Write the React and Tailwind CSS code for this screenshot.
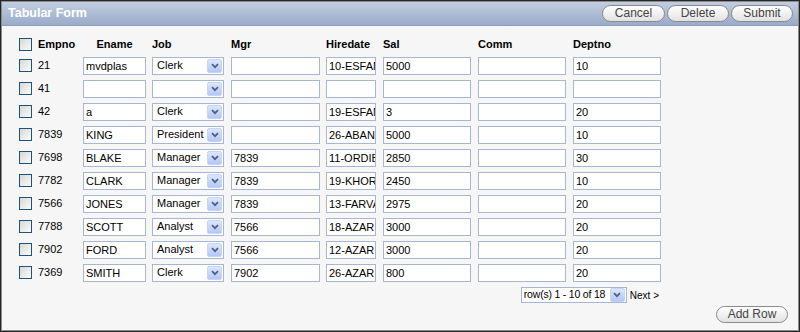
import React from 'react';

const rows = [
  ['21', 'mvdplas', 'Clerk', '', '10-ESFAND', '5000', '', '10'],
  ['41', '', '', '', '', '', '', ''],
  ['42', 'a', 'Clerk', '', '19-ESFAND', '3', '', '20'],
  ['7839', 'KING', 'President', '', '26-ABAN', '5000', '', '10'],
  ['7698', 'BLAKE', 'Manager', '7839', '11-ORDIBEHESHT', '2850', '', '30'],
  ['7782', 'CLARK', 'Manager', '7839', '19-KHORDAD', '2450', '', '10'],
  ['7566', 'JONES', 'Manager', '7839', '13-FARVARDIN', '2975', '', '20'],
  ['7788', 'SCOTT', 'Analyst', '7566', '18-AZAR', '3000', '', '20'],
  ['7902', 'FORD', 'Analyst', '7566', '12-AZAR', '3000', '', '20'],
  ['7369', 'SMITH', 'Clerk', '7902', '26-AZAR', '800', '', '20'],
];

const font = { fontFamily: '"Liberation Sans", Arial, sans-serif' };

// XP style checkbox
function Check() {
  return (
    <div className="w-[13px] h-[13px] border border-[#1c5180] bg-linear-to-br from-[#d8d8d2] to-[#fbfbfa]" />
  );
}

function Arrow() {
  return (
    <div className="w-[15px] h-[14px] shrink-0 flex items-center justify-center rounded-[2px] bg-linear-to-b from-[#dce6fc] to-[#b4c8f5] border border-[#c6d4f6]">
      <svg width="8" height="6" viewBox="0 0 8 6">
        <path d="M1 1.2 L4 4.2 L7 1.2" fill="none" stroke="#4d6185" strokeWidth="1.8" />
      </svg>
    </div>
  );
}

function Field({ value, w }) {
  return (
    <div
      className={`${w} h-[18px] border border-[#a5b7d2] bg-white text-[11px] leading-[16px] pl-[2px] overflow-hidden whitespace-nowrap text-black`}
    >
      {value}
    </div>
  );
}

function Select({ value }) {
  return (
    <div className="w-[72px] h-[18px] border border-[#a5b7d2] bg-white flex items-center justify-between pl-[4px] pr-[1px] text-[11px] text-black">
      <span>{value}</span>
      <Arrow />
    </div>
  );
}

function PillButton({ children, w }) {
  return (
    <button
      className={`${w} h-[17px] rounded-full border border-[#8a8a8a] bg-linear-to-b from-white to-[#e2e2e2] text-[12px] leading-[15px] text-[#444]`}
    >
      {children}
    </button>
  );
}

export default function App() {
  return (
    <div className="w-[800px] h-[332px] border border-[#262626]" style={font}>
      <div className="h-full border border-[#8c8c8c] bg-[#f6f6f6] flex flex-col">
        <div className="h-[24px] flex items-center justify-between pl-[6px] pr-[5px] bg-linear-to-b from-[#c2cde0] to-[#9aabc9] border-b border-[#8d9dbb]">
          <span className="text-white font-bold text-[12.5px]">Tabular Form</span>
          <div className="flex gap-[2px]">
            <PillButton w="w-[63px]">Cancel</PillButton>
            <PillButton w="w-[62px]">Delete</PillButton>
            <PillButton w="w-[62px]">Submit</PillButton>
          </div>
        </div>

        <div className="pl-[17px] pt-[9px] w-[660px]">
          <div className="flex items-center h-[19px] text-[11px] font-bold text-black">
            <div className="w-[19px]"><Check /></div>
            <div className="w-[45px]">Empno</div>
            <div className="w-[69px] text-center pr-[6px]">Ename</div>
            <div className="w-[79px]">Job</div>
            <div className="w-[95px]">Mgr</div>
            <div className="w-[57px]">Hiredate</div>
            <div className="w-[95px]">Sal</div>
            <div className="w-[95px]">Comm</div>
            <div>Deptno</div>
          </div>

          {rows.map((r) => (
            <div key={r[0]} className="flex items-center h-[23px] text-[11px] text-black">
              <div className="w-[19px]"><Check /></div>
              <div className="w-[45px]">{r[0]}</div>
              <div className="w-[69px]"><Field value={r[1]} w="w-[63px]" /></div>
              <div className="w-[79px]"><Select value={r[2]} /></div>
              <div className="w-[95px]"><Field value={r[3]} w="w-[89px]" /></div>
              <div className="w-[57px]"><Field value={r[4]} w="w-[50px]" /></div>
              <div className="w-[95px]"><Field value={r[5]} w="w-[88px]" /></div>
              <div className="w-[95px]"><Field value={r[6]} w="w-[88px]" /></div>
              <div><Field value={r[7]} w="w-[88px]" /></div>
            </div>
          ))}

          <div className="flex justify-end items-center mt-[3px] pr-[3px] gap-[3px]">
            <div className="w-[106px] h-[16px] border border-[#a5b7d2] bg-white flex items-center justify-between pl-[2px] pr-[1px] text-[10.5px] text-black whitespace-nowrap">
              <span className="tracking-[-0.2px]">row(s) 1 - 10 of 18</span>
              <Arrow />
            </div>
            <span className="text-[10px] text-black whitespace-nowrap">Next &gt;</span>
          </div>
        </div>

        <div className="flex justify-end pr-[10px] mt-[3px]">
          <PillButton w="w-[72px]">Add Row</PillButton>
        </div>
      </div>
    </div>
  );
}
